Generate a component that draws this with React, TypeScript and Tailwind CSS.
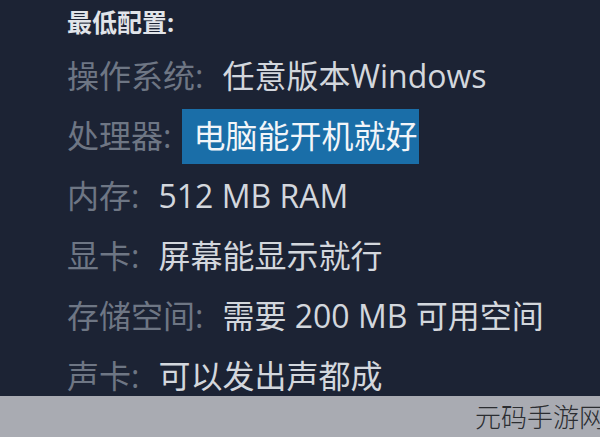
const rows: { label: string; value: string; highlight?: boolean }[] = [
  { label: "操作系统:", value: "任意版本Windows" },
  { label: "处理器:", value: "电脑能开机就好", highlight: true },
  { label: "内存:", value: "512 MB RAM" },
  { label: "显卡:", value: "屏幕能显示就行" },
  { label: "存储空间:", value: "需要 200 MB 可用空间" },
  { label: "声卡:", value: "可以发出声都成" },
];

export default function App() {
  return (
    <main className="flex h-[437px] w-[600px] flex-col overflow-hidden bg-[#1c2334] font-['Open_Sans','Noto_Sans_CJK_SC',sans-serif]">
      <section className="h-[396px] overflow-hidden pl-[67px]">
        <h1 className="mt-[8px] h-[28px] text-[25px] font-bold leading-[28px] text-[#e1e4e9]">最低配置:</h1>
        <div className="mt-[10px] flex flex-col">
          {rows.map((row) => (
            <div key={row.label} className="flex h-[60px] items-center text-[32px] leading-none">
              <span className="text-[#6e7684]">{row.label}</span>
              {row.highlight ? (
                <span className="ml-[11px] flex h-[55px] items-center bg-[#1a6ea8] pl-[11px] pr-[2px] text-[#f2f5f9]">
                  {row.value}
                </span>
              ) : (
                <span className="ml-[19px] text-[#d3d7dd]">{row.value}</span>
              )}
            </div>
          ))}
        </div>
      </section>
      <footer className="flex h-[41px] items-center justify-start bg-[#a9abb2] pl-[475px]">
        <span className="whitespace-nowrap text-[26px] font-light leading-none text-[#2b2d31]">元码手游网</span>
      </footer>
    </main>
  );
}
